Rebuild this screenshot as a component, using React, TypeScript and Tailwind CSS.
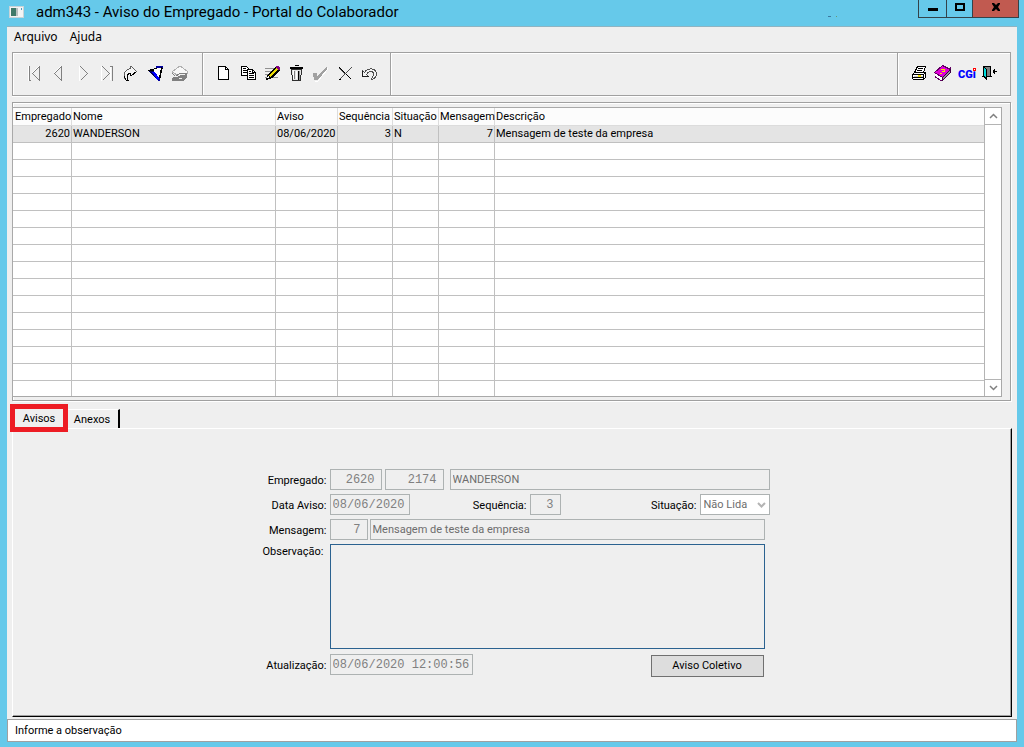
import { useState, type ReactNode } from "react";
import clsx from "clsx";

interface Aviso {
  empregado: string;
  nome: string;
  aviso: string;
  sequencia: string;
  situacao: string;
  mensagem: string;
  descricao: string;
}

const avisos: Aviso[] = [
  {
    empregado: "2620",
    nome: "WANDERSON",
    aviso: "08/06/2020",
    sequencia: "3",
    situacao: "N",
    mensagem: "7",
    descricao: "Mensagem de teste da empresa",
  },
];

const LINHAS = 16;

const colunas: { campo: keyof Aviso; titulo: string; largura: string; direita?: boolean }[] = [
  { campo: "empregado", titulo: "Empregado", largura: "w-[59px]", direita: true },
  { campo: "nome", titulo: "Nome", largura: "w-[204px]" },
  { campo: "aviso", titulo: "Aviso", largura: "w-[62px]" },
  { campo: "sequencia", titulo: "Sequência", largura: "w-[55px]", direita: true },
  { campo: "situacao", titulo: "Situação", largura: "w-[46px]" },
  { campo: "mensagem", titulo: "Mensagem", largura: "w-[56px]", direita: true },
  { campo: "descricao", titulo: "Descrição", largura: "w-auto" },
];

function Icone({ children }: { children: ReactNode }) {
  return (
    <svg width="20" height="20" viewBox="0 0 20 20" fill="none" shapeRendering="crispEdges" aria-hidden="true">
      {children}
    </svg>
  );
}

const icones = {
  primeiro: (
    <Icone>
      <path d="M4.5 3v15M14.5 3.5l-7 7" stroke="#fff" />
      <path d="M5.5 3v15M5 17.5h2M15.5 3.5l-7 7 7 7z" stroke="#808080" />
    </Icone>
  ),
  anterior: (
    <Icone>
      <path d="M12.5 3.5l-7 7" stroke="#fff" />
      <path d="M13.5 3.5l-7 7 7 7z" stroke="#808080" />
    </Icone>
  ),
  proximo: (
    <Icone>
      <path d="M7.5 3v15M8.5 3.5l6 6" stroke="#fff" />
      <path d="M8.5 3.5l7 7-7 7" stroke="#808080" />
    </Icone>
  ),
  ultimo: (
    <Icone>
      <path d="M5.5 3v15M14.5 4v13" stroke="#fff" />
      <path d="M6.5 3.5l7 7-7 7M14 3.5h2M16.5 3v15" stroke="#808080" />
    </Icone>
  ),
  ir: (
    <Icone>
      <path
        d="M10.5 5.5v-2h1l5 5-5 4h-1v-2c-2 0-3.500 1.500-3.500 3.500l1 3h-2c-3-4-2.500-10 4.500-11.500z"
        fill="#f4f4f4"
        stroke="#606060"
      />
      <path d="M16.500 8.500l-5 4h-1v-2c-2 0-3.500 1.500-3.500 3.500l1 3h-2l-2-4" stroke="#000" />
    </Icone>
  ),
  filtro: (
    <Icone>
      <path d="M4.500 7.500l14-4-3 14z" fill="#fff" stroke="#000" />
      <path d="M4 7h5l5 8 1 3-3-2z" fill="#000060" />
      <path d="M8 9h3l4 6v3h-1z" fill="#0000ff" />
      <path d="M12 3h7v2h-7zM15 15h1v3h-2z" fill="#0000a0" />
      <path d="M4 7h6v1h-6zM17 4h1l-2 11h-1z" fill="#000" />
    </Icone>
  ),
  cartao: (
    <Icone>
      <path d="M4 9l8-6 7 5v3l-8 2z" fill="#f8f8f8" stroke="#b0b0b0" />
      <path d="M3 10h2l2 3 5-3h7v5l-4 3h-11v-3l2-2z" fill="#808080" />
      <path d="M5 13h5l3-2h4M11 15h3" stroke="#f0f0f0" />
    </Icone>
  ),
  novo: (
    <Icone>
      <path d="M5.5 3.500h7l3 3v10h-10z" fill="#fff" stroke="#000" />
      <path d="M12.500 3.500v3h3" stroke="#000" />
    </Icone>
  ),
  copiar: (
    <Icone>
      <path d="M4.500 3.500h5l3 3v6h-8z" fill="#fff" stroke="#000" />
      <path d="M6 5.500h3M6 7.500h4M6 9.500h4" stroke="#000" />
      <path d="M10.500 6.500h5l3 3v7h-8z" fill="#fff" stroke="#000" />
      <path d="M15.500 6.500v3h3M12 8.500h2M12 10.500h5M12 12.500h5M12 14.500h5" stroke="#000" />
    </Icone>
  ),
  editar: (
    <Icone>
      <path d="M4 5.500h10M4 8.500h8M4 11.500h6M4 14.500h13" stroke="#909090" />
      <path d="M5 17l2-6 8-8h2l2 2v2l-8 8z" fill="#000" />
      <path d="M8.500 13.500l8-8" stroke="#e8d800" strokeWidth="2" />
      <path d="M15 3h2l2 2v2h-2l-2-2z" fill="#800080" />
      <path d="M7 13h1v2h-2v-1h1z" fill="#fff" />
    </Icone>
  ),
  excluir: (
    <Icone>
      <path d="M6.500 6.500h10l-1 11h-8z" fill="#e4e4e4" stroke="#303030" />
      <path d="M9.500 2.500h4" stroke="#000" />
      <path d="M5.500 4.500h12v1h-12z" fill="#a8a8a8" stroke="#000" />
      <path d="M8.500 7v9M11.500 8v8" stroke="#fff" />
      <path d="M9.500 8v8" stroke="#808080" />
      <path d="M13.500 8v9" stroke="#000" />
      <path d="M14.500 8v9" stroke="#909090" />
    </Icone>
  ),
  confirmar: (
    <Icone>
      <path d="M6 18h3l9-11v-2M5 12v5" stroke="#fff" />
      <path d="M4 10h4v3l9-9h1v2l-9 11h-4z" fill="#a0a0a0" />
    </Icone>
  ),
  cancelar: (
    <Icone>
      <path d="M6.500 4.500l12 12" stroke="#000" />
      <path d="M6.500 5.500l6 6M18.500 4.500l-13 13" stroke="#505050" />
      <path d="M6 16h2v1h-2z" fill="#000" />
    </Icone>
  ),
  desfazer: (
    <Icone>
      <path
        d="M5.500 7.500v6h6l-2-2c1-3 6-5 7-1 0 2-1 4-2 6h1c2-1 4-3 4-6-1-6-9-6-12-1z"
        fill="#f4f4f4"
        stroke="#505050"
      />
      <path d="M5.500 8v5.500h6" stroke="#202020" />
    </Icone>
  ),
  imprimir: (
    <Icone>
      <path d="M8.500 3.500h8l-2 6h-9z" fill="#fff" stroke="#000" />
      <path d="M9 5.500h5M8 7.500h5" stroke="#000" />
      <path d="M3.500 11.500l2-2h11v5l-2 2h-10l-1-1z" fill="#fff" stroke="#000" />
      <path d="M3 11.500h11l3-2M14.500 12v4M4 14.500h10" stroke="#000" />
      <path d="M5 13h9v1h-9z" fill="#c8c8c8" />
      <path d="M9 12h3v2h-3z" fill="#f0e000" />
    </Icone>
  ),
  livro: (
    <Icone>
      <path d="M2 10v4l7 4 8-10v-3z" fill="#fff" stroke="#600060" />
      <path d="M1.500 9.500l8-7 8 4-8 8z" fill="#e000d8" stroke="#600060" />
      <path d="M9.500 14.500l8-8v3l-8 8z" fill="#909090" stroke="#400040" />
      <path d="M2 11l7 4v2l-7-4z" fill="#fff" />
      <path d="M8 6.500h3v2h-2M7 10.500h2" stroke="#f0e800" />
    </Icone>
  ),
  cgi: (
    <Icone>
      <text x="1" y="15" fill="#0000ff" className="font-['Roboto',sans-serif] text-[11px] font-black">
        CGi
      </text>
      <path d="M16 5h3v3h-3z" fill="#f00" />
      <path d="M17 6h1v1h-1z" fill="#fff" />
    </Icone>
  ),
  sair: (
    <Icone>
      <path d="M2.500 3.500h7v10h-7z" fill="#808080" stroke="#000" />
      <path d="M2 3l4 3v12l-4-4z" fill="#000" />
      <path d="M3 5l2 2v8l-2-2z" fill="#00e0e0" />
      <path d="M1 13.500h3M7 13.500h4" stroke="#000" />
      <path d="M12 8.500h4M13.500 6v5M12.500 7v3" stroke="#000" />
    </Icone>
  ),
};

type NomeIcone = keyof typeof icones;

function GrupoBotoes({ itens, className }: { itens: [NomeIcone, string][]; className?: string }) {
  return (
    <div
      className={clsx(
        "flex items-start border-r border-[#a0a0a0] pt-2 shadow-[inset_1px_1px_0_#fff]",
        className,
      )}
    >
      {itens.map(([nome, rotulo]) => (
        <button
          key={nome}
          type="button"
          aria-label={rotulo}
          className="flex h-6 w-6 items-center justify-center"
        >
          {icones[nome]}
        </button>
      ))}
    </div>
  );
}

function BarraTitulo() {
  return (
    <header className="flex h-[26px] items-start pr-[5px] pl-[9px]">
      <div className="flex h-6 flex-1 items-center gap-3">
        <svg width="15" height="12" viewBox="0 0 15 12" shapeRendering="crispEdges" aria-hidden="true">
          <path d="M0 0h15v12h-15z" fill="#c8d4d8" />
          <path d="M1 1h13v10h-13z" fill="#f4f4f4" />
          <path d="M2 2h5v8h-5z" fill="#3f7a6a" />
          <path d="M7 2h2v8h-2z" fill="#b8c0c0" />
          <path d="M12 2h1v2h-1z" fill="#50a0c0" />
        </svg>
        <h1 className="font-['Roboto',sans-serif] text-[15px] leading-6 whitespace-nowrap">
          adm343 - Aviso do Empregado - Portal do Colaborador
        </h1>
      </div>
      <svg width="10" height="18" shapeRendering="crispEdges" aria-hidden="true" className="mr-20">
        <path d="M0 16h3v1h-3z" fill="#3a78a0" />
        <path d="M8 16h1v1h-1z" fill="#6a9a70" />
      </svg>
      <div className="flex h-[18px] border border-t-0 border-[#33434a]">
        <button type="button" aria-label="Minimizar" className="flex w-7 justify-center border-r border-[#33434a]">
          <svg width="10" height="12" shapeRendering="crispEdges" aria-hidden="true">
            <path d="M0 8h10v3h-10z" fill="#000" />
          </svg>
        </button>
        <button type="button" aria-label="Maximizar" className="flex w-[26px] justify-center border-r border-[#33434a]">
          <svg width="10" height="12" shapeRendering="crispEdges" aria-hidden="true">
            <path d="M1 4h8v6h-8z" fill="none" stroke="#000" strokeWidth="2" />
          </svg>
        </button>
        <button type="button" aria-label="Fechar" className="flex w-[45px] justify-center bg-[#c15a50]">
          <svg width="10" height="12" aria-hidden="true">
            <path d="M1 3h2l2 2 2-2h2v1l-2 3 2 3v1h-2l-2-2-2 2h-2v-1l2-3-2-3z" fill="#000" />
          </svg>
        </button>
      </div>
    </header>
  );
}

function Grade() {
  return (
    <section className="mr-1.5 ml-[5px] border border-[#a0a0a0] bg-[#efefef] pt-1 pr-2 pb-[3px] shadow-[1px_1px_0_#fff,inset_1px_1px_0_#fff]">
      <div className="-ml-px flex border border-[#a9a9a9]">
        <div className="h-[288px] flex-1 overflow-hidden bg-white">
          <table className="w-full table-fixed border-separate border-spacing-0">
            <thead>
              <tr className="h-[18px] bg-[#fcfcfc]">
                {colunas.map((c) => (
                  <th
                    key={c.campo}
                    className={clsx(
                      "border-r border-b border-[#dcdcdc] pt-px pr-0 pb-0 pl-px text-left leading-4 font-normal whitespace-nowrap first:pl-0.5 last:border-r-0",
                      c.largura,
                    )}
                  >
                    {c.titulo}
                  </th>
                ))}
              </tr>
            </thead>
            <tbody>
              {Array.from({ length: LINHAS }, (_, i) => (
                <tr key={i} className={clsx("h-[17px]", avisos[i] && "bg-[#e4e4e4]")}>
                  {colunas.map((c) => (
                    <td
                      key={c.campo}
                      className={clsx(
                        "border-r border-b border-[#c0c0c0] py-0 leading-4 whitespace-nowrap last:border-r-0",
                        c.direita ? "pr-px pl-0 text-right" : "pr-0 pl-px",
                      )}
                    >
                      {avisos[i]?.[c.campo]}
                    </td>
                  ))}
                </tr>
              ))}
            </tbody>
          </table>
        </div>
        <div className="flex w-[17px] flex-col justify-between border-l border-[#b4b4b4] bg-white">
          <button type="button" aria-label="Rolar para cima" className="flex h-[17px] items-center justify-center border-b border-[#b4b4b4]">
            <svg width="9" height="6" fill="none" aria-hidden="true">
              <path d="M1 5l3.500-3.500 3.500 3.500" stroke="#808080" strokeWidth="1.500" />
            </svg>
          </button>
          <button type="button" aria-label="Rolar para baixo" className="flex h-[17px] items-center justify-center border-t border-[#b4b4b4]">
            <svg width="9" height="6" fill="none" aria-hidden="true">
              <path d="M1 1l3.500 3.500 3.500-3.500" stroke="#808080" strokeWidth="1.500" />
            </svg>
          </button>
        </div>
      </div>
    </section>
  );
}

function Rotulo({ para, children, className }: { para: string; children: ReactNode; className?: string }) {
  return (
    <label htmlFor={para} className={clsx("text-right leading-4 whitespace-nowrap", className)}>
      {children}
    </label>
  );
}

function Campo({
  id,
  valor,
  className,
  texto,
  rotulo,
}: {
  id: string;
  valor: string;
  className: string;
  texto?: boolean;
  rotulo?: string;
}) {
  return (
    <input
      id={id}
      aria-label={rotulo}
      defaultValue={valor}
      readOnly
      className={clsx(
        "h-[21px] border border-[#adb2b2] bg-[#efefef] outline-none",
        texto
          ? "px-0.5 pb-px text-[#6d6d6d]"
          : "font-['Liberation_Mono',monospace] text-[12px] text-[#808080]",
        className,
      )}
    />
  );
}

function FormAviso() {
  const [obs, setObs] = useState("");

  return (
    <form className="mx-auto flex w-full max-w-[515px] flex-col gap-1 pt-10">
      <div className="flex">
        <Rotulo para="empregado" className="w-[75px] pt-1 pr-[3px]">Empregado:</Rotulo>
        <Campo id="empregado" valor="2620" className="w-[52px] pr-1.5 text-right" />
        <Campo id="matricula" rotulo="Matrícula" valor="2174" className="ml-[3px] w-[59px] pr-1.5 text-right" />
        <Campo id="nome" rotulo="Nome" valor="WANDERSON" texto className="ml-1.5 min-w-0 flex-1" />
      </div>
      <div className="flex">
        <Rotulo para="data" className="w-[75px] pt-1 pr-[3px]">Data Aviso:</Rotulo>
        <Campo id="data" valor="08/06/2020" className="w-20 px-0.5" />
        <Rotulo para="sequencia" className="w-[120px] pt-1 pr-[3px]">Sequência:</Rotulo>
        <Campo id="sequencia" valor="3" className="w-[31px] pr-1.5 text-right" />
        <Rotulo para="situacao" className="flex-1 pt-1 pr-[3px]">Situação:</Rotulo>
        <div className="relative w-[70px]">
          <select
            id="situacao"
            className="h-[21px] w-full appearance-none border border-[#adb2b2] bg-white pt-px pl-[3px] text-[#6d6d6d] outline-none"
          >
            <option>Não Lida</option>
            <option>Lida</option>
          </select>
          <svg
            width="9"
            height="7"
            fill="none"
            aria-hidden="true"
            className="pointer-events-none absolute top-2 right-1"
          >
            <path d="M1 1l3.500 3.500 3.500-3.500" stroke="#b4b4b4" strokeWidth="2" />
          </svg>
        </div>
      </div>
      <div className="flex pr-[5px]">
        <Rotulo para="mensagem" className="w-[75px] pt-1 pr-[3px]">Mensagem:</Rotulo>
        <Campo id="mensagem" valor="7" className="w-[38px] pr-1.5 text-right" />
        <Campo id="descricao" rotulo="Descrição" valor="Mensagem de teste da empresa" texto className="ml-0.5 min-w-0 flex-1" />
      </div>
      <div className="flex pr-[5px]">
        <Rotulo para="observacao" className="w-[75px] pr-1.5">Observação:</Rotulo>
        <textarea
          id="observacao"
          autoFocus
          value={obs}
          onChange={(e) => setObs(e.target.value)}
          className="h-[105px] min-w-0 flex-1 resize-none border border-[#2b6290] bg-[#efefef] px-0.5 py-px outline-none"
        />
      </div>
      <div className="flex pt-px pr-[5px]">
        <Rotulo para="atualizacao" className="w-[75px] pt-1 pr-[3px]">Atualização:</Rotulo>
        <Campo id="atualizacao" valor="08/06/2020 12:00:56" className="w-[143px] px-0.5" />
        <button
          type="button"
          className="mt-px mr-px ml-auto h-[22px] w-[113px] border border-[#707070] bg-[#dddddd]"
        >
          Aviso Coletivo
        </button>
      </div>
    </form>
  );
}

export default function App() {
  const [aba, setAba] = useState("avisos");

  return (
    <div className="flex min-h-screen flex-col bg-[#66c9ea] pb-[5px] font-['Roboto',Arial,sans-serif] text-[11px] text-black">
      <BarraTitulo />
      <main className="mx-[7px] flex flex-1 flex-col border-t border-[#8fb4c2] bg-[#efefef]">
        <nav className="flex h-[22px] gap-3 px-[7px] pb-0.5 font-['Noto_Sans','Open_Sans',sans-serif] text-[12px]">
          <button type="button">Arquivo</button>
          <button type="button">Ajuda</button>
        </nav>

        <div className="mt-[3px] mr-1.5 mb-1.5 ml-[5px] flex h-11 border border-r-0 border-[#a0a0a0] shadow-[0_1px_0_#fff]">
          <GrupoBotoes
            className="w-[190px] pl-[9px]"
            itens={[
              ["primeiro", "Primeiro"],
              ["anterior", "Anterior"],
              ["proximo", "Próximo"],
              ["ultimo", "Último"],
              ["ir", "Ir para"],
              ["filtro", "Filtrar"],
              ["cartao", "Cartão"],
            ]}
          />
          <GrupoBotoes
            className="w-[188px] pl-2"
            itens={[
              ["novo", "Novo"],
              ["copiar", "Copiar"],
              ["editar", "Editar"],
              ["excluir", "Excluir"],
              ["confirmar", "Confirmar"],
              ["cancelar", "Cancelar"],
              ["desfazer", "Desfazer"],
            ]}
          />
          <GrupoBotoes className="flex-1" itens={[]} />
          <GrupoBotoes
            className="w-[113px] pl-[9px]"
            itens={[
              ["imprimir", "Imprimir"],
              ["livro", "Manual"],
              ["cgi", "CGI"],
              ["sair", "Sair"],
            ]}
          />
        </div>

        <Grade />

        <div role="tablist" className="mt-[3px] flex h-7 items-start pl-[3px]">
          <button
            type="button"
            role="tab"
            aria-selected={aba === "avisos"}
            onClick={() => setAba("avisos")}
            className="z-10 h-7 w-[58px] border-[5px] border-[#ed1c24] bg-[#efefef] pt-0.5"
          >
            Avisos
          </button>
          <button
            type="button"
            role="tab"
            aria-selected={aba === "anexos"}
            onClick={() => setAba("anexos")}
            className="mt-[5px] h-5 w-[52px] border-t border-r-2 border-t-white border-r-black pt-0.5 pr-0.5"
          >
            Anexos
          </button>
        </div>

        <section className="mx-[5px] -mt-1 mb-0.5 flex-1 border-t border-r border-b border-l border-t-white border-r-black border-b-black border-l-white pb-8 shadow-[inset_-1px_-1px_0_#a0a0a0]">
          <FormAviso />
        </section>

        <footer className="flex h-[23px] items-center border border-[#a0a0a0] bg-white pt-0.5 pl-[7px]">
          Informe a observação
        </footer>
      </main>
    </div>
  );
}
